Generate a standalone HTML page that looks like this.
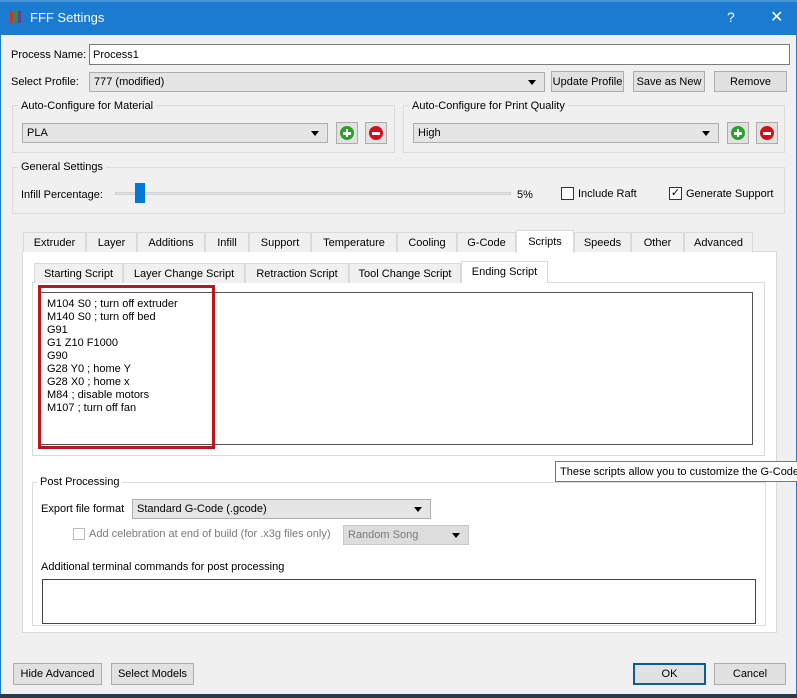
<!DOCTYPE html>
<html><head><meta charset="utf-8"><style>
*{box-sizing:border-box;margin:0;padding:0}
body{width:797px;height:698px;overflow:hidden;background:#f0f0f0;font-family:"Liberation Sans",sans-serif;font-size:11px;color:#000;position:relative}
.a{position:absolute;white-space:nowrap}
.btn{position:absolute;background:#e1e1e1;border:1px solid #adadad;text-align:center;line-height:20px;white-space:nowrap}
.combo{position:absolute;background:#e5e5e5;border:1px solid #adadad;padding-left:4px;line-height:19px;white-space:nowrap}
.combo:after{content:"";position:absolute;right:8px;top:7px;border-left:4px solid transparent;border-right:4px solid transparent;border-top:5px solid #000}
.grp{position:absolute;border:1px solid #dcdcdc}
.gt{position:absolute;background:#f0f0f0;padding:0 3px;line-height:14px;white-space:nowrap}
.tab{position:absolute;top:232px;height:20px;border:1px solid #dadada;border-bottom:none;background:#f0f0f0;text-align:center;line-height:20px;white-space:nowrap}
.it{position:absolute;top:263px;height:20px;border:1px solid #dadada;border-bottom:none;background:#f0f0f0;text-align:center;line-height:20px;white-space:nowrap}
.cb{position:absolute;width:13px;height:13px;border:1px solid #333;background:#fff}
.ic{position:absolute;width:22px;height:22px;border:1px solid #adadad;background:#e1e1e1}
.ic i{position:absolute;left:3px;top:3px;width:14px;height:14px;border-radius:50%}
.ic i:before,.ic i:after{content:"";position:absolute;background:#fff}
.ic i:before{left:3px;top:6px;width:8px;height:2.5px}
.p i:after{left:5.75px;top:3px;width:2.5px;height:8px}
</style></head><body>
<div class="a" style="left:0;top:0;width:797px;height:35px;background:#1a7bd0"></div>
<div class="a" style="left:0;top:0;width:797px;height:2px;background:#4a95d8"></div>
<div class="a" style="left:10px;top:11px;width:3px;height:12px;background:#c0392b"></div>
<div class="a" style="left:14px;top:10px;width:3px;height:13px;background:#2e8b57"></div>
<div class="a" style="left:18px;top:11px;width:3px;height:12px;background:#6a3d9a"></div>
<div class="a" style="left:30px;top:10px;color:#fff;font-size:13px">FFF Settings</div>
<div class="a" style="left:727px;top:9px;color:#fff;font-size:14px">?</div>
<div class="a" style="left:770px;top:7px;color:#fff;font-size:16px">✕</div>
<div class="a" style="left:0;top:35px;width:1px;height:660px;background:#1a7bd0"></div>
<div class="a" style="left:796px;top:35px;width:1px;height:660px;background:#1a7bd0"></div>
<div class="a" style="left:0;top:694px;width:797px;height:4px;background:#2b3a4a"></div>

<div class="a" style="left:11px;top:49px">Process Name:</div>
<div class="a" style="left:89px;top:44px;width:701px;height:21px;background:#fff;border:1px solid #7a7a7a;padding:4px 3px">Process1</div>
<div class="a" style="left:11px;top:76px">Select Profile:</div>
<div class="combo" style="left:89px;top:72px;width:456px;height:20px">777 (modified)</div>
<div class="btn" style="left:551px;top:71px;width:73px;height:21px">Update Profile</div>
<div class="btn" style="left:633px;top:71px;width:72px;height:21px">Save as New</div>
<div class="btn" style="left:714px;top:71px;width:73px;height:21px">Remove</div>

<div class="grp" style="left:12px;top:105px;width:383px;height:48px"></div>
<div class="gt" style="left:18px;top:99px">Auto-Configure for Material</div>
<div class="combo" style="left:22px;top:123px;width:306px;height:20px">PLA</div>
<div class="ic p" style="left:336px;top:122px"><i style="background:#2ca02c"></i></div>
<div class="ic" style="left:365px;top:122px"><i style="background:#d0101a"></i></div>
<div class="grp" style="left:403px;top:105px;width:382px;height:48px"></div>
<div class="gt" style="left:409px;top:99px">Auto-Configure for Print Quality</div>
<div class="combo" style="left:413px;top:123px;width:306px;height:20px">High</div>
<div class="ic p" style="left:727px;top:122px"><i style="background:#2ca02c"></i></div>
<div class="ic" style="left:756px;top:122px"><i style="background:#d0101a"></i></div>

<div class="grp" style="left:12px;top:167px;width:773px;height:47px"></div>
<div class="gt" style="left:18px;top:160px">General Settings</div>
<div class="a" style="left:21px;top:189px">Infill Percentage:</div>
<div class="a" style="left:115px;top:192px;width:396px;height:3px;border:1px solid #d0d0d0;background:#e7e7e7"></div>
<div class="a" style="left:135px;top:183px;width:10px;height:20px;background:#0078d7"></div>
<div class="a" style="left:517px;top:189px">5%</div>
<div class="cb" style="left:561px;top:187px"></div>
<div class="a" style="left:578px;top:188px">Include Raft</div>
<div class="cb" style="left:669px;top:187px;font-size:11px;line-height:11px;text-align:center">✓</div>
<div class="a" style="left:686px;top:188px">Generate Support</div>

<div class="a" style="left:22px;top:251px;width:755px;height:382px;background:#fff;border:1px solid #dadada"></div>
<div class="tab" style="left:23px;width:63px">Extruder</div>
<div class="tab" style="left:86px;width:51px">Layer</div>
<div class="tab" style="left:137px;width:68px">Additions</div>
<div class="tab" style="left:205px;width:44px">Infill</div>
<div class="tab" style="left:249px;width:62px">Support</div>
<div class="tab" style="left:311px;width:86px">Temperature</div>
<div class="tab" style="left:397px;width:60px">Cooling</div>
<div class="tab" style="left:457px;width:59px">G-Code</div>
<div class="tab" style="left:516px;width:58px;top:230px;height:23px;background:#fff;line-height:22px;z-index:2">Scripts</div>
<div class="tab" style="left:574px;width:57px">Speeds</div>
<div class="tab" style="left:631px;width:53px">Other</div>
<div class="tab" style="left:684px;width:69px">Advanced</div>

<div class="a" style="left:32px;top:282px;width:733px;height:174px;background:#fff;border:1px solid #dadada"></div>
<div class="it" style="left:34px;width:89px">Starting Script</div>
<div class="it" style="left:123px;width:122px">Layer Change Script</div>
<div class="it" style="left:245px;width:104px">Retraction Script</div>
<div class="it" style="left:349px;width:112px">Tool Change Script</div>
<div class="it" style="left:461px;width:87px;top:261px;height:22px;background:#fff;z-index:2">Ending Script</div>
<div class="a" style="left:39px;top:292px;width:714px;height:153px;background:#fff;border:1px solid #555"></div>
<div class="a" style="left:38px;top:285px;width:177px;height:164px;border:3px solid #c0141c"></div>
<div class="a" style="left:47px;top:298px;font-size:11px;line-height:13px">M104 S0 ; turn off extruder<br>M140 S0 ; turn off bed<br>G91<br>G1 Z10 F1000<br>G90<br>G28 Y0 ; home Y<br>G28 X0 ; home x<br>M84 ; disable motors<br>M107 ; turn off fan</div>

<div class="grp" style="left:32px;top:482px;width:734px;height:144px"></div>
<div class="gt" style="left:37px;top:475px;background:#fff">Post Processing</div>
<div class="a" style="left:41px;top:503px">Export file format</div>
<div class="combo" style="left:132px;top:499px;width:299px;height:20px">Standard G-Code (.gcode)</div>
<div class="a" style="left:73px;top:528px;width:12px;height:12px;border:1px solid #bbb;background:#fff"></div>
<div class="a" style="left:89px;top:528px;color:#7a7a7a">Add celebration at end of build (for .x3g files only)</div>
<div class="combo" style="left:343px;top:525px;width:126px;height:20px;color:#7a7a7a;background:#ddd;border-color:#c8c8c8">Random Song</div>
<div class="a" style="left:41px;top:561px">Additional terminal commands for post processing</div>
<div class="a" style="left:42px;top:579px;width:714px;height:45px;border:1px solid #444;background:#fff"></div>

<div class="a" style="left:555px;top:461px;width:245px;height:21px;background:#fff;border:1px solid #767676;padding:4px 4px;z-index:5">These scripts allow you to customize the G-Code</div>

<div class="btn" style="left:13px;top:663px;width:89px;height:22px">Hide Advanced</div>
<div class="btn" style="left:111px;top:663px;width:83px;height:22px">Select Models</div>
<div class="btn" style="left:633px;top:663px;width:73px;height:22px;border:2px solid #0e5a9a;line-height:18px">OK</div>
<div class="btn" style="left:714px;top:663px;width:72px;height:22px">Cancel</div>
</body></html>
